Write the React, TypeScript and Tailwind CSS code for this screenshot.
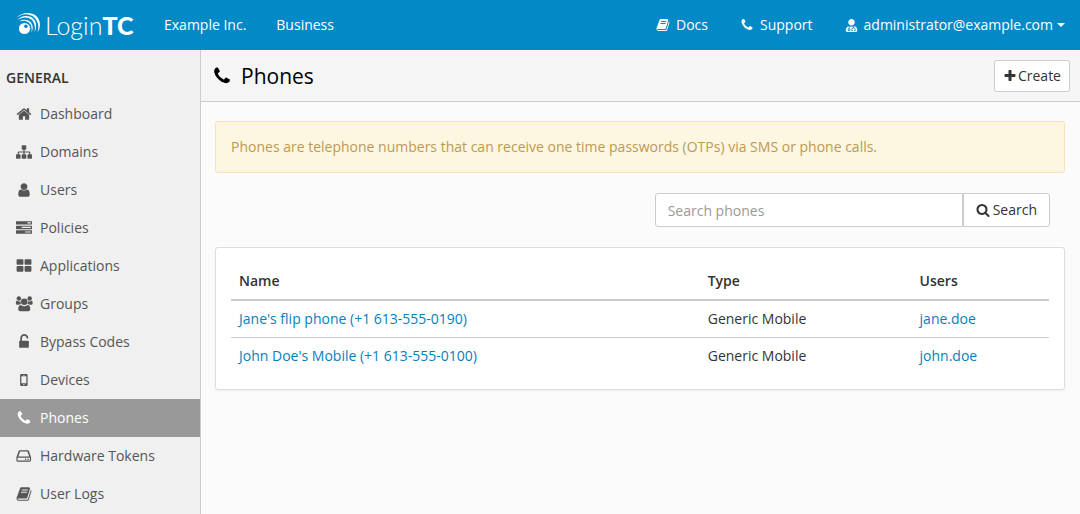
import { FaUserMd } from 'react-icons/fa';

const icons = {
    phone: <path d="M1600 1240q0 27-10 70.5t-21 68.5q-21 50-122 106-94 51-186 51-27 0-53-3.5t-57-12.5-47-14.5-55.5-20.5-49.5-18q-98-35-175-83-127-79-264-216t-216-264q-48-77-83-175-3-9-18-49.5t-20.5-55.5-14.5-47-12.5-57-3.5-53q0-92 51-186 56-101 106-122 25-11 68.5-21t70.5-10q14 0 21 3 18 6 53 76 11 19 30 54t35 63.5 31 53.5q3 4 17.5 25t21.5 35.5 7 28.5q0 20-28.5 50t-62 55-62 53-28.5 46q0 9 5 22.5t8.5 20.5 14 24 11.5 19q76 137 174 235t235 174q2 1 19 11.5t24 14 20.5 8.5 22.5 5q18 0 46-28.5t53-62 55-62 50-28.5q14 0 28.5 7t35.5 21.5 25 17.5q25 15 53.5 31t63.5 35 54 30q70 35 76 53 3 7 3 21z" />,
    home: <path d="M1472 992v480q0 26-19 45t-45 19h-384v-384h-256v384h-384q-26 0-45-19t-19-45v-480q0-1 .5-3t.5-3l575-474 575 474q1 2 1 6zm223-69l-62 74q-8 9-21 11h-3q-13 0-21-7l-692-577-692 577q-12 8-24 7-13-2-21-11l-62-74q-8-10-7-23.5t11-21.5l719-599q32-26 76-26t76 26l244 204v-195q0-14 9-23t23-9h192q14 0 23 9t9 23v408l219 182q10 8 11 21.5t-7 23.5z" />,
    sitemap: <path d="M1792 1248v320q0 40-28 68t-68 28h-320q-40 0-68-28t-28-68v-320q0-40 28-68t68-28h96v-192h-512v192h96q40 0 68 28t28 68v320q0 40-28 68t-68 28h-320q-40 0-68-28t-28-68v-320q0-40 28-68t68-28h96v-192h-512v192h96q40 0 68 28t28 68v320q0 40-28 68t-68 28h-320q-40 0-68-28t-28-68v-320q0-40 28-68t68-28h96v-192q0-52 38-90t90-38h512v-192h-96q-40 0-68-28t-28-68v-320q0-40 28-68t68-28h320q40 0 68 28t28 68v320q0 40-28 68t-68 28h-96v192h512q52 0 90 38t38 90v192h96q40 0 68 28t28 68z" />,
    user: <path d="M1536 1399q0 109-62.5 187t-150.5 78h-854q-88 0-150.5-78t-62.5-187q0-85 8.5-160.5t31.5-152 58.5-131 94-89 134.5-34.5q131 128 313 128t313-128q76 0 134.5 34.5t94 89 58.5 131 31.5 152 8.5 160.5zm-256-887q0 159-112.5 271.5t-271.5 112.5-271.5-112.5-112.5-271.5 112.5-271.5 271.5-112.5 271.5 112.5 112.5 271.5z" />,
    tasks: <path d="M1024 1408h640v-128h-640v128zm-384-512h1024v-128h-1024v128zm640-512h384v-128h-384v128zm512 832v256q0 26-19 45t-45 19h-1664q-26 0-45-19t-19-45v-256q0-26 19-45t45-19h1664q26 0 45 19t19 45zm0-512v256q0 26-19 45t-45 19h-1664q-26 0-45-19t-19-45v-256q0-26 19-45t45-19h1664q26 0 45 19t19 45zm0-512v256q0 26-19 45t-45 19h-1664q-26 0-45-19t-19-45v-256q0-26 19-45t45-19h1664q26 0 45 19t19 45z" />,
    large: <path d="M832 1024v384q0 52-38 90t-90 38h-512q-52 0-90-38t-38-90v-384q0-52 38-90t90-38h512q52 0 90 38t38 90zm0-768v384q0 52-38 90t-90 38h-512q-52 0-90-38t-38-90v-384q0-52 38-90t90-38h512q52 0 90 38t38 90zm896 768v384q0 52-38 90t-90 38h-512q-52 0-90-38t-38-90v-384q0-52 38-90t90-38h512q52 0 90 38t38 90zm0-768v384q0 52-38 90t-90 38h-512q-52 0-90-38t-38-90v-384q0-52 38-90t90-38h512q52 0 90 38t38 90z" />,
    group: (
        <>
            <circle cx="320" cy="270" r="250" />
            <circle cx="1530" cy="270" r="250" />
            <path d="M100 540q200 110 410 40q-30 180 60 320q-180 10-250 90h-170q-170-20-170-190q0-260 100-260z" />
            <path d="M1750 540q-200 110-410 40q30 180-60 320q180 10 250 90h170q170-20 170-190q0-260-100-260z" />
            <circle cx="925" cy="640" r="370" />
            <path d="M560 1020q160 140 365 140t365-140q300 20 310 440q0 260-230 260h-890q-230 0-230-260q10-420 310-440z" />
        </>
    ),
    unlock: <path d="M576 768h768q40 0 68 28t28 68v576q0 40-28 68t-68 28h-896q-40 0-68-28t-28-68v-576q0-40 28-68t68-28h32v-320q0-185 131-316t317-132 317 132 131 316q0 26-19 45t-45 19h-64q-26 0-45-19t-19-45q0-106-75-181t-181-75-181 75-75 181v320z" />,
    mobile: <path fillRule="evenodd" d="M600 230h560q140 0 140 140v1060q0 140-140 140h-560q-140 0-140-140v-1060q0-140 140-140zm0 240v780h560v-780zm180-140v50h200v-50zm100 1010a70 70 0 1 0 1 0z" />,
    drive: (
        <>
            <path fillRule="evenodd" d="M450 256h844q120 0 160 110l220 650q16 40 16 90v270q0 160-160 160h-1330q-160 0-160-160v-270q0-50 16-90l230-650q40-110 164-110zm20 128l-216 576h1230l-210-576zm-302 704v290q0 30 32 30h1330q32 0 32-30v-290z" />
            <circle cx="1080" cy="1248" r="85" />
            <circle cx="1350" cy="1248" r="85" />
        </>
    ),
    book: <path d="M1703 478q40 57 18 129l-275 906q-19 64-76.5 107.5t-122.5 43.5h-923q-77 0-148.5-53.5t-99.5-131.5q-24-67-2-127 0-4 3-27t4-37q1-8-3-21.5t-3-19.5q2-11 8-21t16.5-23.5 16.5-23.5q23-38 45-91.5t30-91.5q3-10 .5-30t-.5-28q3-11 17-28t17-23q21-36 42-92t25-90q1-9-2.5-32t.5-28q4-13 22-30.5t22-22.5q19-26 42.5-84.5t27.5-96.5q1-8-3-25.5t-2-26.5q2-8 9-18t18-23 17-21q8-12 16.5-30.5t15-35 16-36 19.5-32 26.5-23.5 36-11.5 47.5 5.5l-1 3q38-9 51-9h761q74 0 114 56t18 130l-274 906q-36 119-71.5 153.5t-128.5 34.5h-869q-27 0-38 15-11 16-1 43 24 70 144 70h923q29 0 56-15.5t35-41.5l300-987q7-22 5-57 38 15 59 43zm-1064 2q-4 13 2 22.5t20 9.5h608q13 0 25.5-9.5t16.5-22.5l21-64q4-13-2-22.5t-20-9.5h-608q-13 0-25.5 9.5t-16.5 22.5zm-83 256q-4 13 2 22.5t20 9.5h608q13 0 25.5-9.5t16.5-22.5l21-64q4-13-2-22.5t-20-9.5h-608q-13 0-25.5 9.5t-16.5 22.5z" />,
    search: <path d="M1216 832q0-185-131.5-316.5t-316.5-131.5-316.5 131.5-131.5 316.5 131.5 316.5 316.5 131.5 316.5-131.5 131.5-316.5zm512 832q0 52-38 90t-90 38q-54 0-90-38l-343-342q-179 124-399 124-143 0-273.5-55.5t-225-150-150-225-55.5-273.5 55.5-273.5 150-225 225-150 273.5-55.5 273.5 55.5 225 150 150 225 55.5 273.5q0 220-124 399l343 343q37 37 37 90z" />,
    plus: <path d="M1600 736v192q0 40-28 68t-68 28h-416v416q0 40-28 68t-68 28h-192q-40 0-68-28t-28-68v-416h-416q-40 0-68-28t-28-68v-192q0-40 28-68t68-28h416v-416q0-40 28-68t68-28h192q40 0 68 28t28 68v416h416q40 0 68 28t28 68z" />,
};

type IconName = keyof typeof icons;

const Icon = ({ name, className = 'size-4' }: { name: IconName; className?: string }) => (
    <svg viewBox="0 0 1792 1792" fill="currentColor" aria-hidden="true" className={`shrink-0 overflow-visible ${className}`}>
        {icons[name]}
    </svg>
);

const menu: { label: string; icon: IconName }[] = [
    { label: 'Dashboard', icon: 'home' },
    { label: 'Domains', icon: 'sitemap' },
    { label: 'Users', icon: 'user' },
    { label: 'Policies', icon: 'tasks' },
    { label: 'Applications', icon: 'large' },
    { label: 'Groups', icon: 'group' },
    { label: 'Bypass Codes', icon: 'unlock' },
    { label: 'Devices', icon: 'mobile' },
    { label: 'Phones', icon: 'phone' },
    { label: 'Hardware Tokens', icon: 'drive' },
    { label: 'User Logs', icon: 'book' },
];

const phones = [
    { name: "Jane's flip phone (+1 613-555-0190)", type: 'Generic Mobile', user: 'jane.doe' },
    { name: "John Doe's Mobile (+1 613-555-0100)", type: 'Generic Mobile', user: 'john.doe' },
];

const Logo = () => (
    <a href="#" className="flex items-center gap-[3px] w-[118px] shrink-0">
        <svg viewBox="0 0 26 26" className="size-[26px] shrink-0" fill="white" aria-hidden="true">
            <circle cx="8.500" cy="16.500" r="5.600" />
            <circle cx="9.900" cy="14.300" r="1.800" fill="#0289c6" />
            {/* crescents, inner to outer */}
            <path d="M3.500 9.200C9 5.800 16.800 8.500 16.700 15.500Q16.700 18 15.500 20.500Q15.800 17.500 15.500 15.500C14.800 9.800 9.500 7.600 3.500 9.200z" />
            <path d="M1.300 8.200C6 1.800 19.500 2.200 20.200 13.500Q20.300 17 18.500 20.300Q19.200 16.500 18.700 14C17.300 4.800 8 3.200 1.300 8.200z" />
            <path d="M.8 5.500C7-1.700 23.800-.8 24 13Q24 17 21.500 20.500Q22.800 16 22.100 12.500C20 1.500 8-.5.8 5.500z" />
        </svg>
        <span className="font-[Lato,sans-serif] text-[25px] leading-8 font-light">
            Login<span className="font-black">TC</span>
        </span>
    </a>
);

const Navbar = () => (
    <header className="flex items-center h-[50px] pl-4 pr-[15px] bg-[#0289c6] text-white">
        <Logo />
        <nav className="flex flex-1 items-center justify-between font-medium">
            <div className="flex gap-[30px] pl-[30px]">
                <a href="#">Example Inc.</a>
                <a href="#">Business</a>
            </div>
            <div className="flex items-center gap-8">
                <a href="#" className="flex items-center gap-[6px]">
                    <Icon name="book" className="size-[14px]" />
                    Docs
                </a>
                <a href="#" className="flex items-center gap-[6px]">
                    <Icon name="phone" className="size-[14px]" />
                    Support
                </a>
                <button type="button" className="flex items-center">
                    <FaUserMd className="size-[13px] mr-[6px]" />
                    administrator@example.com
                    <svg viewBox="0 0 8 4" className="w-2 h-1 ml-1" fill="currentColor" aria-hidden="true">
                        <path d="M0 0h8L4 4z" />
                    </svg>
                </button>
            </div>
        </nav>
    </header>
);

const Sidebar = () => (
    <aside className="w-[201px] shrink-0 bg-[#f0f0f0] border-r border-[#ccc]">
        <h2 className="px-[6px] pt-[18px] pb-[7px] leading-5 font-semibold">GENERAL</h2>
        <ul>
            {menu.map((item) => (
                <li key={item.label}>
                    <a
                        href="#"
                        className={`flex items-center gap-2 h-[38px] pl-4 ${item.label === 'Phones' ? 'bg-[#999] text-white font-medium' : 'text-[#555]'}`}
                    >
                        <Icon name={item.icon} />
                        {item.label}
                    </a>
                </li>
            ))}
        </ul>
    </aside>
);

const PhoneTable = () => (
    <section className="mt-5 p-[15px] bg-white border border-[#ddd] rounded-[3px] shadow-xs">
        <table className="w-full table-fixed border-separate border-spacing-0 text-left">
            <thead>
                <tr className="leading-5">
                    <th className="w-[57.3%] p-2 font-semibold border-b-2 border-[#ccc]">Name</th>
                    <th className="w-[25.9%] p-2 font-semibold border-b-2 border-[#ccc]">Type</th>
                    <th className="p-2 font-semibold border-b-2 border-[#ccc]">Users</th>
                </tr>
            </thead>
            <tbody className="[&>tr:not(:last-child)>td]:border-b">
                {phones.map((phone) => (
                    <tr key={phone.user} className="leading-5">
                        <td className="p-2 border-[#ccc]">
                            <a href="#" className="text-[#0480be]">{phone.name}</a>
                        </td>
                        <td className="p-2 border-[#ccc]">{phone.type}</td>
                        <td className="p-2 border-[#ccc]">
                            <a href="#" className="text-[#0480be]">{phone.user}</a>
                        </td>
                    </tr>
                ))}
            </tbody>
        </table>
    </section>
);

const App = () => {
    return (
        <div className="min-h-screen flex flex-col bg-[#fbfbfb] font-['Open_Sans',sans-serif] text-sm text-[#333]">
            <Navbar />
            <div className="flex flex-1">
                <Sidebar />
                <main className="flex-1 min-w-0">
                    <div className="flex items-center justify-between h-[52px] pl-[11px] pr-[10px] bg-[#f5f5f5] border-b border-[#ccc]">
                        <h1 className="flex items-center gap-[9px] text-[21px] text-black">
                            <Icon name="phone" className="size-5" />
                            Phones
                        </h1>
                        <button type="button" className="flex items-center gap-px h-8 px-2 bg-white border border-[#ccc] rounded-[3px]">
                            <Icon name="plus" className="size-[14px]" />
                            Create
                        </button>
                    </div>

                    <div className="px-[14px] pt-[19px] pb-5 pr-[15px]">
                        <p className="p-[15px] leading-5 bg-[#fdf7e2] border border-[#fbe3b5] rounded-[3px] text-[#c09853]">
                            Phones are telephone numbers that can receive one time passwords (OTPs) via SMS or phone calls.
                        </p>

                        <form className="flex justify-end mt-5 pr-[15px]" onSubmit={(e) => e.preventDefault()}>
                            <input
                                type="search"
                                aria-label="Search phones"
                                placeholder="Search phones"
                                className="w-[308px] h-[34px] px-3 bg-white border border-[#ccc] rounded-l-[3px] placeholder:text-[#999] outline-none"
                            />
                            <button type="submit" className="flex items-center gap-[3px] h-[34px] px-3 bg-white border border-l border-[#ccc] rounded-r-[3px]">
                                <Icon name="search" className="size-[14px]" />
                                Search
                            </button>
                        </form>

                        <PhoneTable />
                    </div>
                </main>
            </div>
        </div>
    );
};

export default App;
